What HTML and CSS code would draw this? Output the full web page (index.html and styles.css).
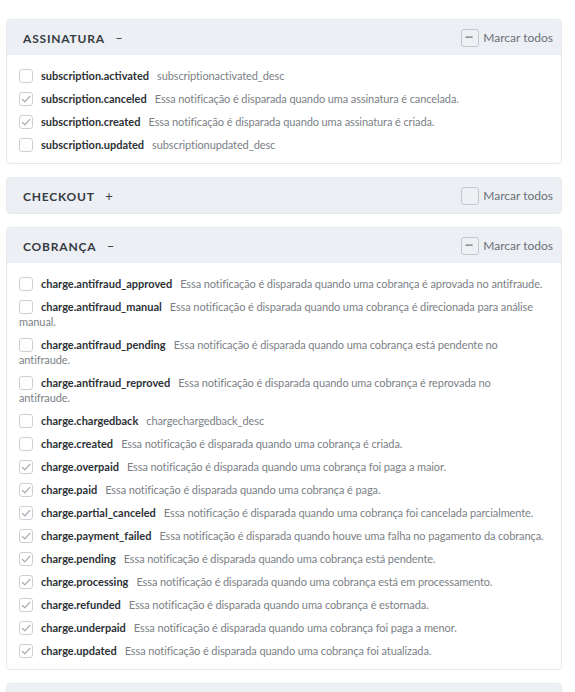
FILE: index.html
```html
<!DOCTYPE html>
<html lang="pt-BR">
<head>
<meta charset="utf-8">
<link rel="stylesheet" href="styles.css">
</head>
<body>
<div class="page">

<section class="card">
  <header class="card-head">
    <div class="title">ASSINATURA <span class="toggle">–</span></div>
    <label class="all"><span class="hcb"><svg viewBox="0 0 18 18"><path d="M5 9h8"/></svg></span>Marcar todos</label>
  </header>
  <div class="card-body">
    <div class="row"><span class="cb"></span><b>subscription.activated</b>subscriptionactivated_desc</div>
    <div class="row"><span class="cb on"><svg viewBox="0 0 14 14"><path d="M3.3 7.4 5.8 9.8 10.8 4.3"/></svg></span><b>subscription.canceled</b>Essa notificação é disparada quando uma assinatura é cancelada.</div>
    <div class="row"><span class="cb on"><svg viewBox="0 0 14 14"><path d="M3.3 7.4 5.8 9.8 10.8 4.3"/></svg></span><b>subscription.created</b>Essa notificação é disparada quando uma assinatura é criada.</div>
    <div class="row"><span class="cb"></span><b>subscription.updated</b>subscriptionupdated_desc</div>
  </div>
</section>

<section class="card">
  <header class="card-head">
    <div class="title">CHECKOUT <span class="toggle">+</span></div>
    <label class="all"><span class="hcb"></span>Marcar todos</label>
  </header>
</section>

<section class="card">
  <header class="card-head">
    <div class="title">COBRANÇA <span class="toggle">–</span></div>
    <label class="all"><span class="hcb"><svg viewBox="0 0 18 18"><path d="M5 9h8"/></svg></span>Marcar todos</label>
  </header>
  <div class="card-body">
    <div class="row"><span class="cb"></span><b>charge.antifraud_approved</b>Essa notificação é disparada quando uma cobrança é aprovada no antifraude.</div>
    <div class="row"><span class="cb"></span><b>charge.antifraud_manual</b>Essa notificação é disparada quando uma cobrança é direcionada para análise manual.</div>
    <div class="row"><span class="cb"></span><b>charge.antifraud_pending</b>Essa notificação é disparada quando uma cobrança está pendente no antifraude.</div>
    <div class="row row-tight"><span class="cb"></span><b>charge.antifraud_reproved</b>Essa notificação é disparada quando uma cobrança é reprovada no antifraude.</div>
    <div class="row"><span class="cb"></span><b>charge.chargedback</b>chargechargedback_desc</div>
    <div class="row"><span class="cb"></span><b>charge.created</b>Essa notificação é disparada quando uma cobrança é criada.</div>
    <div class="row"><span class="cb on"><svg viewBox="0 0 14 14"><path d="M3.3 7.4 5.8 9.8 10.8 4.3"/></svg></span><b>charge.overpaid</b>Essa notificação é disparada quando uma cobrança foi paga a maior.</div>
    <div class="row"><span class="cb on"><svg viewBox="0 0 14 14"><path d="M3.3 7.4 5.8 9.8 10.8 4.3"/></svg></span><b>charge.paid</b>Essa notificação é disparada quando uma cobrança é paga.</div>
    <div class="row"><span class="cb on"><svg viewBox="0 0 14 14"><path d="M3.3 7.4 5.8 9.8 10.8 4.3"/></svg></span><b>charge.partial_canceled</b>Essa notificação é disparada quando uma cobrança foi cancelada parcialmente.</div>
    <div class="row"><span class="cb on"><svg viewBox="0 0 14 14"><path d="M3.3 7.4 5.8 9.8 10.8 4.3"/></svg></span><b>charge.payment_failed</b>Essa notificação é disparada quando houve uma falha no pagamento da cobrança.</div>
    <div class="row"><span class="cb on"><svg viewBox="0 0 14 14"><path d="M3.3 7.4 5.8 9.8 10.8 4.3"/></svg></span><b>charge.pending</b>Essa notificação é disparada quando uma cobrança está pendente.</div>
    <div class="row"><span class="cb on"><svg viewBox="0 0 14 14"><path d="M3.3 7.4 5.8 9.8 10.8 4.3"/></svg></span><b>charge.processing</b>Essa notificação é disparada quando uma cobrança está em processamento.</div>
    <div class="row"><span class="cb on"><svg viewBox="0 0 14 14"><path d="M3.3 7.4 5.8 9.8 10.8 4.3"/></svg></span><b>charge.refunded</b>Essa notificação é disparada quando uma cobrança é estornada.</div>
    <div class="row"><span class="cb on"><svg viewBox="0 0 14 14"><path d="M3.3 7.4 5.8 9.8 10.8 4.3"/></svg></span><b>charge.underpaid</b>Essa notificação é disparada quando uma cobrança foi paga a menor.</div>
    <div class="row"><span class="cb on"><svg viewBox="0 0 14 14"><path d="M3.3 7.4 5.8 9.8 10.8 4.3"/></svg></span><b>charge.updated</b>Essa notificação é disparada quando uma cobrança foi atualizada.</div>
  </div>
</section>

<section class="card">
  <header class="card-head">
    <div class="title">CONTA <span class="toggle">+</span></div>
    <label class="all"><span class="hcb"></span>Marcar todos</label>
  </header>
</section>

</div>
</body>
</html>
```

FILE: styles.css
```css
html, body {
  margin: 0;
  padding: 0;
  background: #ffffff;
}
body {
  font-family: Lato, "Open Sans", sans-serif;
  color: #2f3439;
}
.page {
  padding: 19px 13px 20px 6px;
  display: flex;
  flex-direction: column;
  gap: 13px;
}
.card {
  border: 1px solid #e6e9ee;
  border-radius: 4px;
  background: #fff;
  overflow: hidden;
}
.card-head {
  background: #eceff4;
  height: 35px;
  display: flex;
  align-items: center;
  justify-content: space-between;
  padding: 0 8px 0 16px;
}
.title {
  font-size: 12px;
  font-weight: 700;
  letter-spacing: 0.8px;
  color: #363b41;
  padding-top: 1px;
}
.toggle {
  font-weight: 400;
  font-size: 13px;
  margin-left: 7px;
  letter-spacing: 0;
  color: #3a3f45;
}
.all {
  display: flex;
  align-items: center;
  font-size: 12px;
  color: #6d7177;
  gap: 4px;
}
.hcb {
  width: 16px;
  height: 16px;
  border: 1px solid #c4c8ce;
  border-radius: 3px;
  background: #eef0f4;
  display: inline-flex;
}
.hcb svg {
  width: 16px;
  height: 16px;
}
.hcb path {
  stroke: #6f747b;
  stroke-width: 1.4;
  fill: none;
  transform: translate(-1px, -1px);
}
.card-body {
  padding: 13px 16.5px 11px 12px;
  display: flex;
  flex-direction: column;
  gap: 8px;
}
.row {
  font-size: 11px;
  line-height: 15px;
  color: #7b7f86;
  letter-spacing: -0.1px;
}
.row-tight {
  padding-right: 3px;
}
.row b {
  color: #2d3237;
  font-weight: 700;
  margin-right: 8px;
  letter-spacing: 0;
}
.cb {
  display: inline-block;
  box-sizing: border-box;
  width: 14px;
  height: 14px;
  border: 1px solid #ccd0d5;
  border-radius: 3px;
  background: #fff;
  vertical-align: -3px;
  margin-right: 8px;
  position: relative;
}
.cb svg {
  position: absolute;
  left: -1px;
  top: -1px;
  width: 14px;
  height: 14px;
}
.cb path {
  stroke: #a3a8af;
  stroke-width: 1.2;
  fill: none;
  stroke-linecap: round;
  stroke-linejoin: round;
}
```
